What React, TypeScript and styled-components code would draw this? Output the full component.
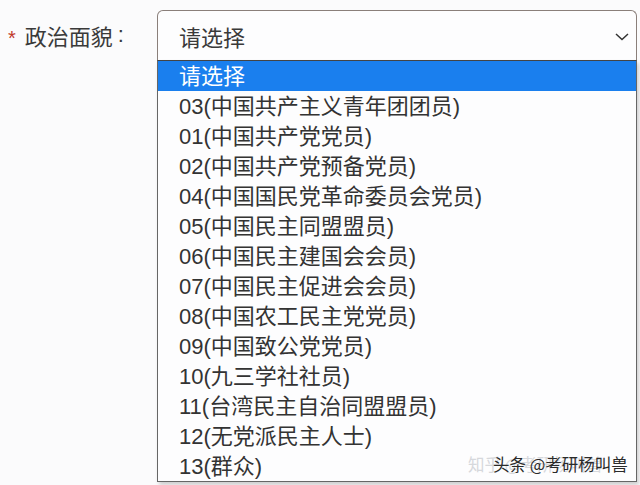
import React from 'react';
import styled, { createGlobalStyle } from 'styled-components';

const GlobalStyle = createGlobalStyle`
  html, body {
    margin: 0;
    padding: 0;
    background: #fbfbfc;
  }
  body {
    font-family: "Liberation Sans", "Noto Sans CJK SC", sans-serif;
    color: #333;
  }
`;

const options = [
  '03(中国共产主义青年团团员)',
  '01(中国共产党党员)',
  '02(中国共产党预备党员)',
  '04(中国国民党革命委员会党员)',
  '05(中国民主同盟盟员)',
  '06(中国民主建国会会员)',
  '07(中国民主促进会会员)',
  '08(中国农工民主党党员)',
  '09(中国致公党党员)',
  '10(九三学社社员)',
  '11(台湾民主自治同盟盟员)',
  '12(无党派民主人士)',
  '13(群众)',
];

const Page = styled.div`
  width: 640px;
  height: 485px;
  overflow: hidden;
  position: relative;
  display: grid;
  grid-template-columns: 157px 480px;
  padding-top: 10px;
  box-sizing: border-box;
`;

const Label = styled.div`
  display: flex;
  align-items: center;
  height: 50px;
  padding-left: 8px;
  font-size: 22px;
  color: #3a3a3a;
`;

const Star = styled.span`
  color: #c0392b;
  font-size: 20px;
  margin-right: 9px;
  position: relative;
  top: 3px;
`;

const Colon = styled.span`
  margin-left: 5px;
`;

const Field = styled.div`
  display: flex;
  flex-direction: column;
`;

const SelectBox = styled.div`
  height: 50px;
  box-sizing: border-box;
  border: 1px solid #8a7f7a;
  border-bottom: none;
  border-radius: 6px 6px 0 0;
  background: #fdfdfe;
  display: flex;
  align-items: center;
  justify-content: space-between;
  padding: 0 6px 0 21px;
  font-size: 22px;
  color: #3a3a3a;
`;

const List = styled.div`
  border: 1px solid #666;
  border-top: 1px solid #444;
  background: #fdfdfe;
  box-shadow: 2px 3px 4px rgba(0, 0, 0, 0.18);
  display: flex;
  flex-direction: column;
`;

const Option = styled.div<{ $active?: boolean }>`
  height: 30px;
  line-height: 31px;
  padding-left: 21px;
  font-size: 22px;
  white-space: nowrap;
  color: ${(p) => (p.$active ? '#ffffff' : '#333333')};
  background: ${(p) => (p.$active ? '#1a7fee' : 'transparent')};
`;

const Watermark = styled.div`
  position: absolute;
  left: 468px;
  top: 452px;
  font-family: "Noto Sans CJK SC", sans-serif;
  font-size: 16.5px;
  white-space: nowrap;
`;

const Faint = styled.span`
  color: #d6d8dc;
`;

const Dark = styled.span`
  position: absolute;
  left: 25px;
  top: 0;
  color: #2a2a2a;
`;

const App: React.FC = () => (
  <>
    <GlobalStyle />
    <Page>
      <Label>
        <Star>*</Star>政治面貌<Colon>:</Colon>
      </Label>
      <Field>
        <SelectBox>
          请选择
          <svg width="16" height="14" viewBox="0 0 16 14">
            <path d="M2 5 L8 10.5 L14 5" fill="none" stroke="#333" strokeWidth="1.5" />
          </svg>
        </SelectBox>
        <List>
          <Option $active>请选择</Option>
          {options.map((o) => (
            <Option key={o}>{o}</Option>
          ))}
        </List>
      </Field>
      <Watermark>
        <Faint>知乎 @考研杨叫兽</Faint>
        <Dark>头条 @考研杨叫兽</Dark>
      </Watermark>
    </Page>
  </>
);

export default App;
